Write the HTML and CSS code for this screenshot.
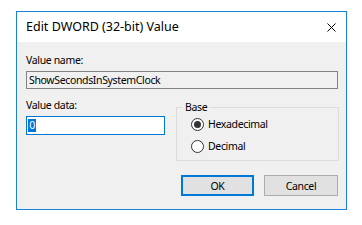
FILE: index.html
```html
<!DOCTYPE html>
<html lang="en">

<head>
    <meta charset="UTF-8">
    <title>Edit DWORD (32-bit) Value</title>
    <link rel="stylesheet" href="styles.css">
</head>

<body>
    <div class="window">
        <div class="titlebar">
            <span class="title">Edit DWORD (32-bit) Value</span>
            <svg class="close" viewBox="0 0 9 9">
                <path d="M0.5 0.5L8.5 8.5M8.5 0.5L0.5 8.5" />
            </svg>
        </div>

        <div class="content">
            <div class="label">Value name:</div>
            <div class="field readonly">ShowSecondsInSystemClock</div>

            <div class="row">
                <div class="data-col">
                    <div class="label">Value data:</div>
                    <div class="field focused"><span class="selected">0</span></div>
                </div>

                <fieldset class="group">
                    <legend>Base</legend>
                    <div class="radio-row">
                        <span class="radio checked"></span>
                        <span>Hexadecimal</span>
                    </div>
                    <div class="radio-row">
                        <span class="radio"></span>
                        <span>Decimal</span>
                    </div>
                </fieldset>
            </div>

            <div class="buttons">
                <div class="btn default">OK</div>
                <div class="btn">Cancel</div>
            </div>
        </div>
    </div>
</body>

</html>
```

FILE: styles.css
```css
* {
    margin: 0;
    padding: 0;
    box-sizing: border-box;
}

body {
    background: #fff;
    font-family: "Noto Sans", "Liberation Sans", sans-serif;
    font-size: 10.5px;
    letter-spacing: -0.35px;
    line-height: 16px;
    color: #000;
}

.window {
    margin: 11px 0 0 16px;
    width: 331px;
    height: 199px;
    border: 1px solid #1883d7;
    background: #f0f0f0;
    display: flex;
    flex-direction: column;
}

.titlebar {
    height: 30px;
    background: #fff;
    display: flex;
    align-items: center;
    justify-content: space-between;
    padding: 0 10px 0 9px;
}

.title {
    font-size: 12.5px;
    letter-spacing: 0;
}

.close {
    width: 9px;
    height: 9px;
    stroke: #000;
    stroke-width: 1;
    fill: none;
}

.content {
    flex: 1;
    padding: 10px 8px 0 9px;
}

.field {
    height: 18px;
    margin-top: 3px;
    padding: 0 2px;
}

.readonly {
    border: 1px solid #838383;
    background: #f0f0f0;
}

.focused {
    width: 139px;
    height: 19px;
    border: 1px solid #0078d7;
    background: #fff;
    padding: 2px 0 0 1px;
}

.selected {
    display: inline-block;
    width: 8px;
    height: 13px;
    line-height: 13px;
    text-align: center;
    vertical-align: top;
    background: #0078d7;
    color: #fff;
}

.row {
    display: flex;
    justify-content: space-between;
    margin-top: 8px;
}

.group {
    width: 163px;
    height: 60px;
    margin: 4px -1px 0 0;
    border: 1px solid #dcdcdc;
    padding: 0 0 0 14px;
}

.group legend {
    line-height: 12px;
    margin-left: -8px;
    padding: 0 2px;
}

.radio-row {
    display: flex;
    align-items: center;
    gap: 4px;
    height: 22px;
}

.radio {
    width: 13px;
    height: 13px;
    border: 1px solid #333;
    border-radius: 50%;
    background: #fff;
    display: flex;
    justify-content: center;
    align-items: center;
}

.radio.checked::after {
    content: '';
    width: 7px;
    height: 7px;
    border-radius: 50%;
    background: #333;
}

.buttons {
    display: flex;
    justify-content: flex-end;
    gap: 10px;
    margin-top: 14px;
}

.btn {
    width: 74px;
    height: 21px;
    border: 1px solid #adadad;
    background: #e1e1e1;
    display: flex;
    justify-content: center;
    align-items: center;
}

.btn.default {
    width: 73px;
    border: 2px solid #0078d7;
}
```
